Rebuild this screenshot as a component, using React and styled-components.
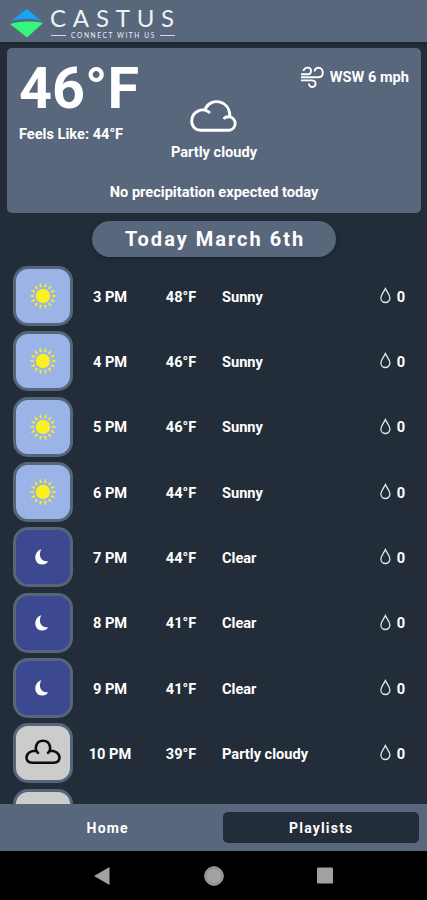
import React, { useState } from 'react';
import styled, { createGlobalStyle } from 'styled-components'

const GlobalStyle = createGlobalStyle`
  * { box-sizing: border-box; }
  body {
    margin: 0;
    background: #232d39;
    color: #fff;
    font-family: Roboto, "Liberation Sans", sans-serif;
    font-size: 14.6px;
    font-weight: 700;
  }
`;

const Screen = styled.div`
  display: flex;
  flex-direction: column;
  height: 900px;
  overflow: hidden;
`;

const Header = styled.header`
  display: flex;
  flex: none;
  height: 42px;
  padding: 8px 0 0 10px;
  gap: 6px;
  background: #58677c;
  box-shadow: 0 1px 4px #16202b;
`;

const Brand = styled.div`
  width: 140px;
  font-family: Lato, sans-serif;
  color: #eef1f5;
`;

const BrandName = styled.div`
  height: 22px;
  font-size: 24px;
  font-weight: 400;
  line-height: 19px;
  letter-spacing: 6.8px;
  white-space: nowrap;
`;

const Tagline = styled.div`
  display: flex;
  align-items: center;
  width: 124px;
  gap: 5px;
  margin: 2px 0 0 1px;
  font-size: 6.6px;
  font-weight: 400;
  line-height: 7px;
  letter-spacing: 1.6px;
  white-space: nowrap;

  &::before, &::after {
    content: '';
    flex: 1;
    height: 1px;
    background: #d5dbe2;
  }
  &::after { margin-left: -1px; }
`;

const Card = styled.section`
  flex: none;
  display: flex;
  flex-direction: column;
  height: 165px;
  margin: 6px 6px 0 7px;
  padding: 0 12px;
  border-radius: 5px;
  background: #58677c;
`;

const CardTop = styled.div`
  display: flex;
  justify-content: space-between;
  height: 52px;
`;

const Temperature = styled.div`
  padding-top: 7px;
  font-size: 57.5px;
  line-height: 68px;
`;

const Wind = styled.div`
  display: flex;
  align-items: center;
  height: 57px;
  gap: 6px;
`;

const CardMiddle = styled.div`
  display: grid;
  grid-template-columns: 1fr auto 1fr;
  height: 64px;
`;

const FeelsLike = styled.div`
  padding-top: 26px;
  line-height: 16px;
`;

const Condition = styled.div`
  display: flex;
  flex-direction: column;
  align-items: center;
  line-height: 16px;

  svg { margin-bottom: 12px; }
`;

const Precipitation = styled.div`
  padding-top: 20px;
  text-align: center;
  line-height: 16px;
`;

const DayLabel = styled.h2`
  flex: none;
  align-self: center;
  width: 244px;
  height: 36px;
  margin: 8px 0 0;
  padding-left: 3px;
  border-radius: 18px;
  background: #58677c;
  box-shadow: 0 1px 4px #18212c;
  font-size: 20px;
  line-height: 37px;
  letter-spacing: 2px;
  text-align: center;
`;

const HourList = styled.div`
  flex: 1;
  min-height: 0;
  overflow: hidden;
  padding: 9px 22px 0 13px;
`;

const HourRow = styled.div`
  display: grid;
  grid-template-columns: 60px 74px 68px 1fr auto;
  align-items: center;
  height: 60px;
  margin-bottom: 5.35px;
`;

const skies = {
  sunny: '#9ab4e7',
  clear: '#3c4890',
  cloudy: '#cbcccb'
};

const Tile = styled.div`
  display: flex;
  align-items: center;
  justify-content: center;
  width: 60px;
  height: 60px;
  border: 3px solid #56667a;
  border-radius: 15px;
  background: ${props => skies[props.$sky]};
`;

const Cell = styled.div`
  padding-top: 1px;
  text-align: center;
`;

const Summary = styled.div`
  padding: 1px 0 0 7px;
`;

const Rain = styled.div`
  display: flex;
  align-items: center;
  gap: 5px;
  padding-top: 1px;

  svg { margin-bottom: 2px; }
`;

const TabBar = styled.nav`
  flex: none;
  display: grid;
  grid-template-columns: 1fr 1fr;
  height: 47px;
  padding: 8px 0;
  background: #58677c;
`;

const Tab = styled.button`
  margin: 0 8px 0 9px;
  padding: 0 0 0 1px;
  border: 0;
  border-radius: 5px;
  background: ${props => props.$active ? '#232d39' : 'transparent'};
  color: #fff;
  font: inherit;
  font-size: 14px;
  letter-spacing: 1.2px;
`;

const SystemBar = styled.div`
  flex: none;
  display: flex;
  align-items: center;
  justify-content: space-between;
  height: 49px;
  padding: 0 94px 0 93px;
  background: #000;
`;

const Logo = () => (
  <svg width="34" height="30" viewBox="0 0 34 30">
    <path d="M1 13 L17 1 L32.5 14 C26 10 14 10 1 13Z" fill="#16a4f5" />
    <path d="M0 16 C11 13 23 13 33 15 L17 29.5Z" fill="#36f67e" />
  </svg>
);

const WindIcon = () => (
  <svg width="24" height="24" viewBox="0 0 24 24" fill="none" stroke="#fff" strokeWidth="1.9">
    <path d="M1 9.2H8C12 9.2 12 2.6 8 2.6C5.6 2.6 4 3.8 3.4 6" />
    <path d="M1 12.3H18.5C24.5 12.3 24 2.8 18.6 2.8C16.3 2.8 14.8 4.2 14.6 6.5" />
    <path d="M1 15.4H11.5C17 15.4 16.5 22 12.5 22C10.3 22 9.1 20.7 9 18.5" />
  </svg>
);

const CloudIcon = () => (
  <svg width="48" height="32" viewBox="0 0 48 32" fill="none" stroke="#fff" strokeWidth="2.9" strokeLinecap="round" strokeLinejoin="round">
    <path d="M10.5 30.2H39.5A6.8 6.8 0 0 0 39.5 16.8C37.5 16.6 36 17 34.5 18M40 16.5C39.5-1 20-2.5 15.3 9M19 12.2C12.5 7 1.7 11.5 1.7 21C1.7 26.5 5.5 30.2 10.5 30.2" />
  </svg>
);

const SunIcon = () => (
  <svg width="28" height="28" viewBox="-14 -14 28 28">
    <circle r="7.2" fill="#fdf020" />
    {Array.from({ length: 14 }, (_, i) => (
      <path key={i} d="M-1-9.5L0-13L1-9.5Z" fill="#f3ea32" stroke="#f3ea32" strokeWidth=".7" transform={`rotate(${i * 360 / 14 + 13})`} />
    ))}
  </svg>
);

const MoonIcon = () => (
  <svg width="20" height="18" viewBox="0 0 20 18">
    <path d="M8.3 1.3C.2 3.3.3 16.5 9 16.5C12 16.5 14 15.5 15 13.2C8.2 14.3 4.8 7.5 8.3 1.3Z" fill="#fff" />
  </svg>
);

const DarkCloudIcon = () => (
  <svg width="38" height="30" viewBox="0 0 38 30" fill="none" stroke="#0b0c0d" strokeWidth="2.6" strokeLinecap="round">
    <path d="M14 14.8C10.5 12.5 11 2.8 19 2.8C27 2.8 27.5 12.5 24 14.8M11.8 12.8C.5 12.8-.2 24.7 8 24.7H30C38.2 24.7 37.5 12.8 26.2 12.8" />
  </svg>
);

const DropIcon = () => (
  <svg width="12" height="17" viewBox="0 0 12 17" fill="none" stroke="#e4e7ea" strokeWidth="1.3">
    <path d="M5.4 1.6C4.1 4.6.9 7.8.9 11A4.5 4.5 0 0 0 9.9 11C9.9 7.8 6.7 4.6 5.4 1.6Z" />
  </svg>
);

const icons = {
  sunny: <SunIcon />,
  clear: <MoonIcon />,
  cloudy: <DarkCloudIcon />
};

const hours = [
  { time: "3 PM", temp: 48, sky: "sunny", text: "Sunny" },
  { time: "4 PM", temp: 46, sky: "sunny", text: "Sunny" },
  { time: "5 PM", temp: 46, sky: "sunny", text: "Sunny" },
  { time: "6 PM", temp: 44, sky: "sunny", text: "Sunny" },
  { time: "7 PM", temp: 44, sky: "clear", text: "Clear" },
  { time: "8 PM", temp: 41, sky: "clear", text: "Clear" },
  { time: "9 PM", temp: 41, sky: "clear", text: "Clear" },
  { time: "10 PM", temp: 39, sky: "cloudy", text: "Partly cloudy" }
];

function App() {
  const [tab, setTab] = useState("Playlists");

  return (
    <Screen>
      <GlobalStyle />
      <Header>
        <Logo />
        <Brand>
          <BrandName>CASTUS</BrandName>
          <Tagline>CONNECT WITH US</Tagline>
        </Brand>
      </Header>
      <Card>
        <CardTop>
          <Temperature>46°F</Temperature>
          <Wind><WindIcon />WSW 6 mph</Wind>
        </CardTop>
        <CardMiddle>
          <FeelsLike>Feels Like: 44°F</FeelsLike>
          <Condition><CloudIcon />Partly cloudy</Condition>
        </CardMiddle>
        <Precipitation>No precipitation expected today</Precipitation>
      </Card>
      <DayLabel>Today March 6th</DayLabel>
      <HourList>
        {hours.map(hour => (
          <HourRow key={hour.time}>
            <Tile $sky={hour.sky}>{icons[hour.sky]}</Tile>
            <Cell>{hour.time}</Cell>
            <Cell>{hour.temp}°F</Cell>
            <Summary>{hour.text}</Summary>
            <Rain><DropIcon />0</Rain>
          </HourRow>
        ))}
        {/* next hour, only its top edge shows above the tabs */}
        <HourRow>
          <Tile $sky="cloudy"><DarkCloudIcon /></Tile>
        </HourRow>
      </HourList>
      <TabBar>
        {["Home", "Playlists"].map(name => (
          <Tab key={name} $active={tab === name} onClick={() => setTab(name)}>{name}</Tab>
        ))}
      </TabBar>
      <SystemBar>
        <svg width="17" height="20" viewBox="0 0 17 20"><path d="M1 10L16.5 1V19Z" fill="#a2a2a2" /></svg>
        <svg width="20" height="20" viewBox="0 0 20 20">
          <circle cx="10" cy="10" r="9.3" fill="#8f8f8f" stroke="#a9a9a9" />
          <circle cx="10" cy="10" r="7.3" fill="#a2a2a2" />
        </svg>
        <svg width="16" height="17" viewBox="0 0 16 17"><rect y=".5" width="16" height="16" rx="1" fill="#a2a2a2" /></svg>
      </SystemBar>
    </Screen>
  );
}

export default App;
